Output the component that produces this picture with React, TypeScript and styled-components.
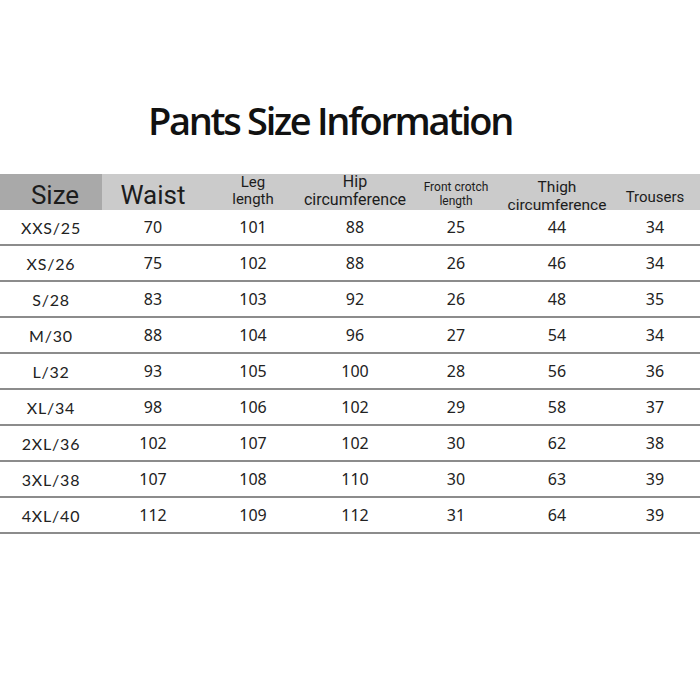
import styled, { createGlobalStyle } from 'styled-components';

const GlobalStyle = createGlobalStyle`
  html, body {
    margin: 0;
    padding: 0;
    background: #ffffff;
  }
  body {
    font-family: "Noto Sans", "Open Sans", sans-serif;
    color: #1a1a1a;
  }
`;

const columns = '102px 102px 98px 106px 96px 106px 90px';

type Header = {
  lines: string[];
  size: number;
  shift: number;
  dark?: boolean;
  indent?: number;
};

const headers: Header[] = [
  { lines: ['Size'], size: 26, shift: 3, dark: true, indent: 8 },
  { lines: ['Waist'], size: 26, shift: 3 },
  { lines: ['Leg', 'length'], size: 15, shift: -1 },
  { lines: ['Hip', 'circumference'], size: 16, shift: -1 },
  { lines: ['Front crotch', 'length'], size: 12, shift: 2 },
  { lines: ['Thigh', 'circumference'], size: 15.5, shift: 4 },
  { lines: ['Trousers'], size: 15, shift: 5 },
];

const rows = [
  ['XXS/25', '70', '101', '88', '25', '44', '34'],
  ['XS/26', '75', '102', '88', '26', '46', '34'],
  ['S/28', '83', '103', '92', '26', '48', '35'],
  ['M/30', '88', '104', '96', '27', '54', '34'],
  ['L/32', '93', '105', '100', '28', '56', '36'],
  ['XL/34', '98', '106', '102', '29', '58', '37'],
  ['2XL/36', '102', '107', '102', '30', '62', '38'],
  ['3XL/38', '107', '108', '110', '30', '63', '39'],
  ['4XL/40', '112', '109', '112', '31', '64', '39'],
];

export default function App() {
  return (
    <>
      <GlobalStyle />
      <Page>
        <Title>Pants Size Information</Title>
        <Table>
          <HeaderRow>
            {headers.map((h) => (
              <HeaderCell key={h.lines.join(' ')} $dark={h.dark} $shift={h.shift} $indent={h.indent ?? 0}>
                {h.lines.map((l) => (
                  <HeaderLine key={l} $size={h.size}>
                    {l}
                  </HeaderLine>
                ))}
              </HeaderCell>
            ))}
          </HeaderRow>
          {rows.map((r) => (
            <Row key={r[0]}>
              {r.map((v, i) => (
                <Cell key={i} $first={i === 0}>
                  {v}
                </Cell>
              ))}
            </Row>
          ))}
        </Table>
      </Page>
    </>
  );
}

const Page = styled.div`
  width: 700px;
  height: 700px;
  display: flex;
  flex-direction: column;
  padding-top: 95px;
  box-sizing: border-box;
`;

const Title = styled.h1`
  margin: 0 40px 0 0;
  text-align: center;
  font-family: "Open Sans", sans-serif;
  font-weight: 600;
  font-size: 38px;
  letter-spacing: -2.3px;
  line-height: 50px;
  color: #111;
  height: 79px;
`;

const Table = styled.div`
  display: flex;
  flex-direction: column;
`;

const HeaderRow = styled.div`
  display: grid;
  grid-template-columns: ${columns};
  height: 36px;
  background: #cbcbcb;
`;

const HeaderCell = styled.div<{ $dark?: boolean; $shift: number; $indent: number }>`
  display: flex;
  flex-direction: column;
  align-items: center;
  justify-content: center;
  background: ${(p) => (p.$dark ? '#a9a9a9' : 'transparent')};
  padding-left: ${(p) => p.$indent}px;
  box-sizing: border-box;
  white-space: nowrap;
  & > span {
    transform: translateY(${(p) => p.$shift}px);
  }
`;

const HeaderLine = styled.span<{ $size: number }>`
  font-family: "Roboto", "Noto Sans", sans-serif;
  font-size: ${(p) => p.$size}px;
  line-height: ${(p) => Math.round(p.$size * 1.15)}px;
  color: #1c1c1c;
`;

const Row = styled.div`
  display: grid;
  grid-template-columns: ${columns};
  height: 36px;
  border-bottom: 2px solid #8c8c8c;
  box-sizing: border-box;
`;

const Cell = styled.div<{ $first?: boolean }>`
  display: flex;
  align-items: center;
  justify-content: center;
  font-family: ${(p) => (p.$first ? '"Lato", "Noto Sans", sans-serif' : '"Noto Sans", sans-serif')};
  font-size: 16px;
  letter-spacing: ${(p) => (p.$first ? '0.8px' : '0')};
  color: #222;
`;
